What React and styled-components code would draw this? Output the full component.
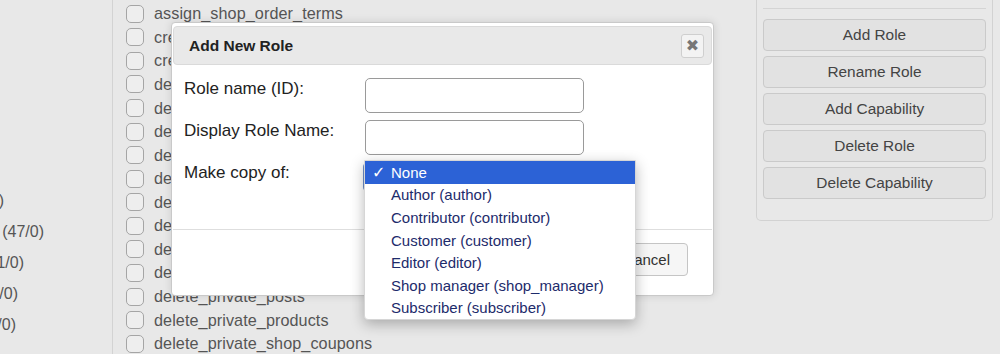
import React from "react";
import styled, { createGlobalStyle } from "styled-components";

const GlobalStyle = createGlobalStyle`
  * { box-sizing: border-box; }
  html, body { margin: 0; padding: 0; background: #e8e8e8; }
  body { font-family: "Liberation Sans", Arial, sans-serif; }
`;

const Page = styled.div`
  position: relative;
  width: 1000px;
  height: 354px;
  overflow: hidden;
  display: flex;
  background: #e8e8e8;
`;

const LeftCol = styled.div`
  width: 113px;
  flex-shrink: 0;
  border-right: 1px solid #d3d3d3;
  padding-top: 185px;
  display: flex;
  flex-direction: column;
  overflow: hidden;
`;

const GroupItem = styled.div`
  height: 31px;
  width: ${(p) => p.$end}px;
  display: flex;
  align-items: center;
  justify-content: flex-end;
  white-space: nowrap;
  font-size: 16px;
  color: #555;
`;

const CapList = styled.div`
  flex: 1;
  padding: 2px 0 0 13px;
  display: flex;
  flex-direction: column;
`;

const CapRow = styled.div`
  height: 23.57px;
  flex-shrink: 0;
  display: flex;
  align-items: center;
  gap: 10px;
  font-size: 16.2px;
  letter-spacing: 0.08px;
  color: #555;
  white-space: nowrap;
`;

const Box = styled.span`
  width: 18px;
  height: 18px;
  flex-shrink: 0;
  border: 1px solid #a5a5a5;
  border-radius: 5px;
  background: #eeeeee;
`;

const RightPanel = styled.div`
  width: 237px;
  flex-shrink: 0;
  margin-right: 7px;
  align-self: flex-start;
  border: 1px solid #d2d2d2;
  border-top: none;
  border-radius: 0 0 5px 5px;
  padding: 0 6px 21px;
`;

const Divider = styled.div`
  margin-top: 8px;
  height: 1px;
  background: #d4d4d4;
`;

const ButtonStack = styled.div`
  margin-top: 10px;
  display: flex;
  flex-direction: column;
  gap: 5px;
`;

const SideButton = styled.div`
  height: 32px;
  display: flex;
  align-items: center;
  justify-content: center;
  border: 1px solid #cacaca;
  border-radius: 4px;
  background: #e2e2e2;
  color: #444;
  font-size: 15.4px;
`;

const Modal = styled.div`
  position: absolute;
  left: 171px;
  top: 22px;
  width: 543px;
  height: 274px;
  background: #fff;
  border: 1px solid #c9c9c9;
  border-radius: 4px;
  padding: 3px 1px 0;
  box-shadow: 0 0 8px rgba(0, 0, 0, 0.12);
  display: flex;
  flex-direction: column;
`;

const TitleBar = styled.div`
  height: 39px;
  flex-shrink: 0;
  background: #e9e9e9;
  border: 1px solid #dadada;
  border-radius: 4px;
  display: flex;
  align-items: center;
  justify-content: space-between;
  padding: 0 7px 0 15px;
  font-weight: bold;
  font-size: 15.5px;
  color: #222;
`;

const CloseButton = styled.div`
  width: 23px;
  height: 24px;
  border: 1px solid #cfcfcf;
  border-radius: 3px;
  background: #f3f3f3;
  display: flex;
  align-items: center;
  justify-content: center;
  color: #777;
  font-family: "DejaVu Sans", sans-serif;
  font-size: 16px;
  font-weight: bold;
`;

const Body = styled.div`
  height: 164px;
  flex-shrink: 0;
  padding: 13px 0 0 11px;
`;

const FormGrid = styled.div`
  display: grid;
  grid-template-columns: 181px 219px;
  row-gap: 7px;
  align-items: start;
`;

const Label = styled.div`
  font-size: 17px;
  line-height: 21px;
  color: #222;
`;

const TextInput = styled.div`
  height: 35px;
  border: 1px solid #9a9a9a;
  border-radius: 5px;
  background: #fff;
`;

const SelectBox = styled.div`
  height: 30px;
  margin-left: -2px;
  border: 2px solid #6f8fc9;
  border-radius: 5px;
  background: #fff;
`;

const ButtonPane = styled.div`
  border-top: 1px solid #dedede;
  padding: 13px 24px 0 0;
  display: flex;
  justify-content: flex-end;
  gap: 8px;
`;

const DialogButton = styled.div`
  height: 33px;
  padding: 0 17px 0 16px;
  display: flex;
  align-items: center;
  border: 1px solid #c5c5c5;
  border-radius: 4px;
  background: #f6f6f6;
  color: #333;
  font-size: 15px;
`;

const Dropdown = styled.div`
  position: absolute;
  left: 364px;
  top: 160px;
  width: 272px;
  background: #fff;
  border: 1px solid #d6d6d6;
  border-radius: 0 0 4px 4px;
  box-shadow: 0 4px 14px rgba(0, 0, 0, 0.28);
`;

const Option = styled.div`
  height: 22.6px;
  display: flex;
  align-items: center;
  padding-left: 7px;
  font-size: 15px;
  white-space: nowrap;
  color: ${(p) => (p.$selected ? "#fff" : "#1d2b6b")};
  background: ${(p) => (p.$selected ? "#2c62d6" : "transparent")};
`;

const Check = styled.span`
  width: 19px;
  flex-shrink: 0;
  font-family: "DejaVu Sans", sans-serif;
  font-size: 16px;
  font-weight: bold;
`;

const groups = [
  { text: "All (52/0)", end: 4 },
  { text: "Custom capabilities (47/0)", end: 44 },
  { text: "General (31/0)", end: 24 },
  { text: "Themes (6/0)", end: 18 },
  { text: "Posts (10/0)", end: 16 },
];

const caps = [
  "assign_shop_order_terms",
  "create_roles",
  "create_users",
  "delete_others_pages",
  "delete_others_posts",
  "delete_others_products",
  "delete_others_shop_coupons",
  "delete_others_shop_orders",
  "delete_pages",
  "delete_plugins",
  "delete_posts",
  "delete_private_pages",
  "delete_private_posts",
  "delete_private_products",
  "delete_private_shop_coupons",
];

const sideButtons = [
  "Add Role",
  "Rename Role",
  "Add Capability",
  "Delete Role",
  "Delete Capability",
];

const options = [
  "None",
  "Author (author)",
  "Contributor (contributor)",
  "Customer (customer)",
  "Editor (editor)",
  "Shop manager (shop_manager)",
  "Subscriber (subscriber)",
];

export default function App() {
  return (
    <>
      <GlobalStyle />
      <Page>
        <LeftCol>
          {groups.map((g) => (
            <GroupItem key={g.text} $end={g.end}>
              {g.text}
            </GroupItem>
          ))}
        </LeftCol>
        <CapList>
          {caps.map((c) => (
            <CapRow key={c}>
              <Box />
              {c}
            </CapRow>
          ))}
        </CapList>
        <RightPanel>
          <Divider />
          <ButtonStack>
            {sideButtons.map((b) => (
              <SideButton key={b}>{b}</SideButton>
            ))}
          </ButtonStack>
        </RightPanel>

        <Modal>
          <TitleBar>
            <span>Add New Role</span>
            <CloseButton>✖</CloseButton>
          </TitleBar>
          <Body>
            <FormGrid>
              <Label>Role name (ID):</Label>
              <TextInput />
              <Label>Display Role Name:</Label>
              <TextInput />
              <Label>Make copy of:</Label>
              <SelectBox />
            </FormGrid>
          </Body>
          <ButtonPane>
            <DialogButton>Add Role</DialogButton>
            <DialogButton>Cancel</DialogButton>
          </ButtonPane>
        </Modal>

        <Dropdown>
          {options.map((o, i) => (
            <Option key={o} $selected={i === 0}>
              <Check>{i === 0 ? "✓" : ""}</Check>
              {o}
            </Option>
          ))}
        </Dropdown>
      </Page>
    </>
  );
}
